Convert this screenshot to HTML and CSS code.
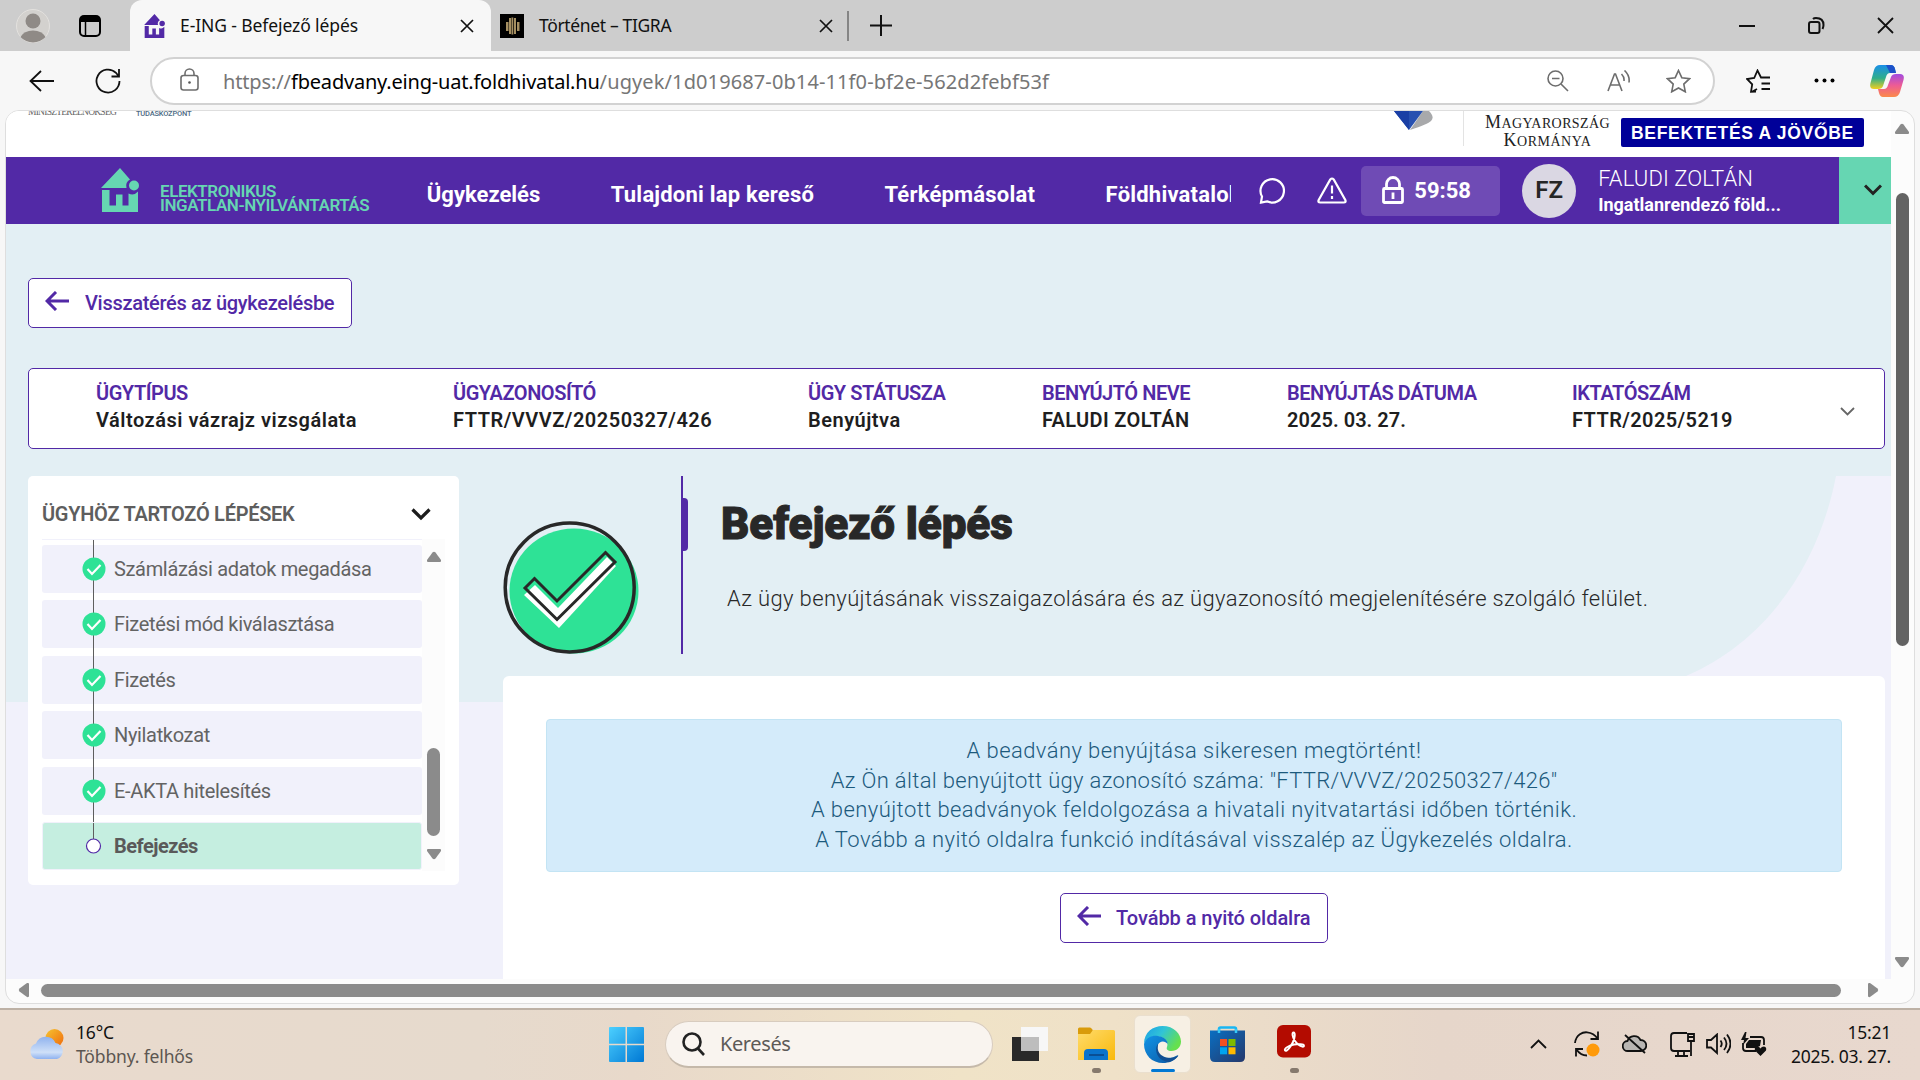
FILE: index.html
```html
<!DOCTYPE html>
<html lang="hu">
<head>
<meta charset="utf-8">
<title>E-ING - Befejező lépés</title>
<link rel="stylesheet" href="styles.css">
</head>
<body>
<svg width="0" height="0" class="defs">
  <defs>
    <linearGradient id="gWin" x1="0" y1="0" x2="1" y2="1"><stop offset="0" stop-color="#4cd0ff"/><stop offset="1" stop-color="#0078d4"/></linearGradient>
    <linearGradient id="gSun" x1="0" y1="0" x2="1" y2="1"><stop offset="0" stop-color="#f6c431"/><stop offset="1" stop-color="#f06a0c"/></linearGradient>
    <linearGradient id="gCloud" x1="0" y1="0" x2="0" y2="1"><stop offset="0" stop-color="#8fb2ee"/><stop offset=".7" stop-color="#cfe0f8"/><stop offset="1" stop-color="#8fb2f0"/></linearGradient>
    <linearGradient id="gFolder" x1="0" y1="0" x2="1" y2="1"><stop offset="0" stop-color="#ffdb6b"/><stop offset="1" stop-color="#f9b90c"/></linearGradient>
    <linearGradient id="gEdgeTop" x1="0" y1="0" x2="1" y2=".5"><stop offset="0" stop-color="#1a9ee8"/><stop offset=".5" stop-color="#31c4d6"/><stop offset="1" stop-color="#66e04e"/></linearGradient>
    <linearGradient id="gEdgeLow" x1="0" y1="0" x2="1" y2="1"><stop offset="0" stop-color="#1193e6"/><stop offset="1" stop-color="#0c59a4"/></linearGradient>
    <linearGradient id="gStore" x1="0" y1="0" x2="1" y2="1"><stop offset="0" stop-color="#0a6fc2"/><stop offset="1" stop-color="#25386b"/></linearGradient>
    <linearGradient id="gCopA" x1="0" y1="0" x2="0" y2="1"><stop offset="0" stop-color="#1a8fe8"/><stop offset=".55" stop-color="#2fae8a"/><stop offset="1" stop-color="#f2cf1d"/></linearGradient>
    <linearGradient id="gCopB" x1="0" y1="0" x2="0" y2="1"><stop offset="0" stop-color="#a24be0"/><stop offset=".5" stop-color="#ee5c94"/><stop offset="1" stop-color="#fb8a4a"/></linearGradient>
    <symbol id="house" viewBox="0 0 38 44">
      <path d="M0 20 19 0l10 11.5a7 7 0 0 0-3.5 8.5zM1 22h7.500v15.500H15V26.500h6.500v11h6V25.500a8 8 0 0 0 9.500-2V44H1z"/>
      <circle cx="33" cy="17.500" r="5"/>
    </symbol>
    <symbol id="arrow" viewBox="0 0 24 20"><path d="M11 1 2 10l9 9M2 10h22" fill="none" stroke="#5229a6" stroke-width="3"/></symbol>
    <symbol id="done" viewBox="0 0 24 24"><circle cx="12" cy="12" r="11.500" fill="#2ee296"/><path d="M5.500 12 10 17l8.500-9" fill="none" stroke="#fff" stroke-width="2.200"/></symbol>
  </defs>
</svg>

<header class="tabs">
  <svg class="avatar" width="34" height="34" viewBox="0 0 34 34"><circle cx="17" cy="17" r="16.500" fill="#d3d1ce" stroke="#e3e1de"/><circle cx="17" cy="12" r="7.500" fill="#8f8a86"/><path d="M4.500 28Q8 21.500 17 21.500T29.500 28A17 17 0 0 1 4.500 28" fill="#8f8a86"/></svg>
  <svg class="workspaces" width="22" height="22" viewBox="0 0 22 22"><rect x="1" y="1" width="20" height="20" rx="4" fill="none" stroke="#000" stroke-width="2"/><path d="M1 7V4q0-3 3-3h14q3 0 3 3v3z"/><path d="M6.500 7v14" stroke="#000" stroke-width="1.500"/></svg>
  <div class="tab tab-active">
    <svg class="favicon violet" width="21" height="24"><use href="#house"/></svg>
    <span class="tab-title">E-ING - Befejező lépés</span>
    <svg class="x" width="14" height="14" viewBox="0 0 14 14"><path d="m1 1 12 12M13 1 1 13"/></svg>
  </div>
  <div class="tab">
    <svg width="24" height="24" viewBox="0 0 24 24"><path d="M0 0h24v24H0z"/><path d="M6 8h2.500v9H6zM9 4h2v16H9zM11.500 3.500h1.800v17h-1.800zM14 4h2v16h-2zM17 8h2.500v9H17z" fill="#a58f61"/></svg>
    <span class="tab-title second">Történet – TIGRA</span>
    <svg class="x" width="14" height="14" viewBox="0 0 14 14"><path d="m1 1 12 12M13 1 1 13"/></svg>
  </div>
  <div class="tab-rule"></div>
  <svg class="plus" width="22" height="22" viewBox="0 0 22 22"><path d="M11 0v21M0 10.500h22"/></svg>
  <svg class="wmin" width="16" height="16" viewBox="0 0 16 16"><path d="M0 8h16"/></svg>
  <svg class="wmax" width="17" height="17" viewBox="0 0 17 17"><rect x="1" y="5" width="10.500" height="11" rx="2"/><path d="M5 2q1-1 3-1 7.500 0 7.500 7 0 2-1 4"/></svg>
  <svg class="wclose" width="17" height="17" viewBox="0 0 17 17"><path d="m1 1 15 15M16 1 1 16"/></svg>
</header>

<div class="toolbar">
  <svg class="nav-back" width="25" height="22" viewBox="0 0 25 22"><path d="M12 1 1.500 11 12 21M1.500 11H25"/></svg>
  <svg class="reload" width="26" height="26" viewBox="0 0 26 26"><path d="M24.500 13A11.500 11.500 0 1 1 21 4.800L23.500 8M24 1v7.500h-7.500"/></svg>
  <div class="address">
    <svg class="padlock" width="19" height="23" viewBox="0 0 19 23"><rect x="1" y="7.500" width="17" height="14.500" rx="2.500"/><path d="M5 7.500V5.500a4.500 4.500 0 0 1 9 0v2"/><circle cx="9.500" cy="14.500" r="1.300" fill="#555" stroke="none"/></svg>
    <div class="url"><span class="scheme">https://</span><span class="host">fbeadvany.eing-uat.foldhivatal.hu</span><span class="path">/ugyek/1d019687-0b14-11f0-bf2e-562d2febf53f</span></div>
    <svg class="zoomout" width="22" height="22" viewBox="0 0 22 22"><circle cx="8.500" cy="8.500" r="7.500"/><path d="M14 14l7 7M5 8.500h7.500"/></svg>
    <svg class="aloud" width="24" height="22" viewBox="0 0 24 22"><path d="M1 21 7.500 4h1L15 21M3.300 15h9.500M14.500 4q3 3 2.500 7M17.500 0.500q5.500 5 4.500 12"/></svg>
    <svg class="star" width="25" height="24" viewBox="0 0 25 24"><path d="m12.500 1.500 3.300 7.200 7.700 1-5.700 5.400 1.500 7.700-6.800-3.800-6.800 3.800 1.500-7.700L1.500 9.700l7.700-1z"/></svg>
  </div>
  <svg class="favs" width="25" height="24" viewBox="0 0 25 24"><path d="m10 22.500-5 .300 1.200-7.500L1 10l7.200-1 3.300-7.500L15 8.500h9M15.500 14.500H24M15.500 20H24M11 20l-5 2.800"/></svg>
  <svg class="dots" width="21" height="5" viewBox="0 0 21 5"><circle cx="2.500" cy="2.500" r="2"/><circle cx="10.500" cy="2.500" r="2"/><circle cx="18.500" cy="2.500" r="2"/></svg>
  <svg class="copilot" width="34" height="32" viewBox="0 0 34 32"><path d="M10 0h11q3 0 4 4l1 4h-6q-3 0-4 4l-3 9q-1 3-5 3H4q-5 0-3.500-6L4 5q1.500-5 6-5z" fill="url(#gCopA)"/><path d="M16 0h5q3 0 4 4l1 4h-6z" fill="#1d51c9"/><path d="M24 32H13q-3 0-4-4l-1-4h6q3 0 4-4l3-8q1-3 5-3h4q5 0 3.500 6L30 27q-1.500 5-6 5z" fill="url(#gCopB)"/></svg>
</div>

<div class="viewport">
  <div class="page">
    <div class="sponsors">
      <span class="ministry">MINISZTERELNÖKSÉG</span>
      <span class="center">TUDÁSKÖZPONT</span>
      <svg class="gem" width="40" height="19" viewBox="0 0 40 19"><path d="M16 19 29 0h6q6 6 2 10-3 3-21 9" fill="#a8a9ab"/><path d="M0 0h29L15 19z" fill="#2750b0"/><path d="M0 0h15v19z" fill="#1a3fa5"/></svg>
      <div class="gov"><span class="gov-one"><b>M</b>AGYARORSZÁG</span><span class="gov-two"><b>K</b>ORMÁNYA</span></div>
      <div class="invest">BEFEKTETÉS A JÖVŐBE</div>
    </div>

    <nav class="nav">
      <svg class="logo" width="38" height="44"><use href="#house"/></svg>
      <div class="brand"><span>ELEKTRONIKUS</span><span>INGATLAN-NYILVÁNTARTÁS</span></div>
      <div class="menu"><a>Ügykezelés</a><a class="spread">Tulajdoni lap kereső</a><a class="spread">Térképmásolat</a><a class="spread">Földhivatalok</a></div>
      <svg class="chat" width="27" height="27" viewBox="0 0 27 27"><path d="M2 25.500 3 19.500A11.700 11.700 0 1 1 8 24.300z"/></svg>
      <svg class="warn" width="30" height="27" viewBox="0 0 30 27"><path d="M13.300 2.500q1.700-2 3.400 0L28.300 23q1 2.500-1.500 2.500H3.200Q.7 25.500 1.700 23zM15 8.500v8M15 19v3"/></svg>
      <div class="timer">
        <svg width="22" height="28" viewBox="0 0 22 28"><rect x="1.500" y="12.500" width="19" height="14" rx="1"/><path d="M4.500 12V8a6.500 6.500 0 0 1 13 0v4M11 16.500v6.500"/></svg>
        <span>59:58</span>
      </div>
      <div class="initials">FZ</div>
      <div class="user"><span class="user-name">FALUDI ZOLTÁN</span><span class="user-role">Ingatlanrendező föld...</span></div>
      <div class="user-open"><svg width="18" height="12" viewBox="0 0 18 12"><path d="m1 1.500 8 8 8-8"/></svg></div>
    </nav>

    <main class="main">
      <svg class="backdrop" width="205" height="226" viewBox="0 0 205 226"><path d="M150 0h55v226H0V200C84 164 134 84 150 0" fill="#f1f1fb"/></svg>
      <button class="btn btn-return"><svg width="24" height="20"><use href="#arrow"/></svg><span>Visszatérés az ügykezelésbe</span></button>

      <section class="case">
        <div><b>ÜGYTÍPUS</b><span>Változási vázrajz vizsgálata</span></div>
        <div><b>ÜGYAZONOSÍTÓ</b><span>FTTR/VVVZ/20250327/426</span></div>
        <div><b>ÜGY STÁTUSZA</b><span>Benyújtva</span></div>
        <div><b>BENYÚJTÓ NEVE</b><span class="name">FALUDI ZOLTÁN</span></div>
        <div><b>BENYÚJTÁS DÁTUMA</b><span class="date">2025. 03. 27.</span></div>
        <div><b>IKTATÓSZÁM</b><span class="file">FTTR/2025/5219</span></div>
        <svg class="case-open" width="15" height="10" viewBox="0 0 15 10"><path d="m1 1 6.500 6.500L14 1"/></svg>
      </section>

      <div class="columns">
        <aside class="side">
          <h2>ÜGYHÖZ TARTOZÓ LÉPÉSEK <svg width="20" height="13" viewBox="0 0 20 13"><path d="m1.500 1.500 8.500 8.500 8.500-8.500"/></svg></h2>
          <div class="side-body">
            <ul class="steps">
              <li><svg width="24" height="24"><use href="#done"/></svg>Számlázási adatok megadása</li>
              <li><svg width="24" height="24"><use href="#done"/></svg>Fizetési mód kiválasztása</li>
              <li><svg width="24" height="24"><use href="#done"/></svg>Fizetés</li>
              <li><svg width="24" height="24"><use href="#done"/></svg>Nyilatkozat</li>
              <li><svg width="24" height="24"><use href="#done"/></svg>E-AKTA hitelesítés</li>
              <li class="current"><svg width="24" height="24" viewBox="0 0 24 24"><circle cx="11.500" cy="12" r="7" fill="#fff" stroke="#5229a6" stroke-width="1.200"/></svg>Befejezés</li>
            </ul>
            <div class="side-scroll">
              <svg width="16" height="12" viewBox="0 0 16 12"><path d="M6.500 1.500q1.500-1.500 3 0L15 9q.5 2-1 2H2Q.5 11 1 9z"/></svg>
              <i></i>
              <svg width="16" height="12" viewBox="0 0 16 12"><path d="M6.500 10.500q1.500 1.500 3 0L15 3q.5-2-1-2H2Q.5 1 1 3z"/></svg>
            </div>
          </div>
        </aside>

        <section class="content">
          <div class="intro">
            <svg class="success" width="136" height="134" viewBox="502 520 136 134"><ellipse cx="573" cy="590" rx="64.500" ry="62.500" fill="#2ee296"/><path d="M523 594 534 584l23 23 49-51 9 9-57 62z" fill="#fff"/><path d="m524 587 9.500-9.500L556 600l48.500-48.500 9.500 9.500-58 57.500z" fill="none" stroke="#282828" stroke-width="3"/><ellipse cx="568.700" cy="586.500" rx="64.500" ry="64.500" fill="none" stroke="#282828" stroke-width="3.500"/></svg>
            <div class="rule"></div>
            <div class="intro-text">
              <h1>Befejező lépés</h1>
              <p>Az ügy benyújtásának visszaigazolására és az ügyazonosító megjelenítésére szolgáló felület.</p>
            </div>
          </div>
          <div class="card">
            <div class="alert">
              <p>A beadvány benyújtása sikeresen megtörtént!</p>
              <p class="case-line">Az Ön által benyújtott ügy azonosító száma: "FTTR/VVVZ/20250327/426"</p>
              <p>A benyújtott beadványok feldolgozása a hivatali nyitvatartási időben történik.</p>
              <p>A Tovább a nyitó oldalra funkció indításával visszalép az Ügykezelés oldalra.</p>
            </div>
            <button class="btn btn-next"><svg width="24" height="20"><use href="#arrow"/></svg><span>Tovább a nyitó oldalra</span></button>
          </div>
        </section>
      </div>
    </main>
  </div>
  <div class="vscroll">
    <svg width="16" height="12" viewBox="0 0 16 12"><path d="M6.500 1.500q1.500-1.500 3 0L15 9q.5 2-1 2H2Q.5 11 1 9z"/></svg>
    <i></i>
    <svg class="down" width="16" height="12" viewBox="0 0 16 12"><path d="M6.500 10.500q1.500 1.500 3 0L15 3q.5-2-1-2H2Q.5 1 1 3z"/></svg>
  </div>
  <div class="hscroll">
    <svg width="12" height="16" viewBox="0 0 12 16"><path d="M1.500 6.500q-1.500 1.500 0 3L9 15q2 .5 2-1V2q0-1.500-2-1z"/></svg>
    <i></i>
    <svg class="right" width="12" height="16" viewBox="0 0 12 16"><path d="M10.500 6.500q1.500 1.500 0 3L3 15q-2 .5-2-1V2q0-1.500 2-1z"/></svg>
  </div>
</div>

<footer class="taskbar">
  <svg class="weather" width="36" height="31" viewBox="0 0 36 31"><circle cx="25.500" cy="9" r="9" fill="url(#gSun)"/><path d="M8 30a8 8 0 0 1-1-15.500A10.500 10.500 0 0 1 26.500 14 8.200 8.200 0 0 1 28 30z" fill="url(#gCloud)"/></svg>
  <div class="weather-text"><span>16°C</span><span class="muted">Többny. felhős</span></div>
  <svg class="start" width="35" height="35" viewBox="0 0 35 35" fill="url(#gWin)"><path d="M1 0h15.500v16.700H0V1q0-1 1-1zM18 0h16q1 0 1 1v15.700H18zM0 18.300h16.500V35H1q-1 0-1-1zM18 18.300h17V34q0 1-1 1H18z"/></svg>
  <div class="search"><svg width="23" height="24" viewBox="0 0 23 24"><circle cx="10" cy="10" r="8.500"/><path d="m16 16.500 6 6.500"/></svg><span>Keresés</span></div>
  <svg class="taskview" width="36" height="34" viewBox="0 0 36 34"><path d="M0 10h27v24H0z" fill="#292929"/><path d="M9 0h27v24H9z" fill="#f7f7f7"/><path d="M9 10h18v14H9z" fill="#bdbdbd"/></svg>
  <div class="app app-files"><svg width="37" height="33" viewBox="0 0 37 33"><path d="M0 2q0-1.500 1.500-1.500H12q1 0 2 1.500l1 1.500V8H0z" fill="#d99b0a"/><path d="M0 7h12l3-4h20.500q1.500 0 1.500 1.500V33H0z" fill="url(#gFolder)"/><path d="M6 33v-7q0-4 4-4h16q4 0 4 4v7z" fill="#0a74cc"/><path d="M11 28h15" stroke="#0a4f94" stroke-width="2"/></svg><i></i></div>
  <div class="app app-edge"><svg width="37" height="37" viewBox="0 0 37 37"><path d="M0 18C0 6 9 0 18.500 0 30 0 37 8 37 15.500 37 21 33 25 27.500 25c-4 0-5.500-2-4.500-4 1.500-4-.5-9-8-10.500C8 9.500 2 13 0 18" fill="url(#gEdgeTop)"/><path d="M0 18c2-7 9-9 14-8 7 1 10 5 9.500 8-2-3-8-4-10 2-2.500 7 4 12 10.500 12 4 0 7-1.500 9-2.500 1.500-.5 1 .5.500 1C30 35 25 37 19 37 8 37 0 29 0 18" fill="url(#gEdgeLow)"/><path d="M14 18c-4 4-2 17 11 18 4-1 8-4 9.500-6.500-7 5-19 2-20.500-5.500-.5-2.500 0-4.500 0-6" fill="#124f92"/></svg><i></i></div>
  <svg class="store" width="35" height="36" viewBox="0 0 35 36"><path d="M9 7V3q0-1.500 1.500-1.500h14Q26 1.500 26 3v4" fill="none" stroke="#19b6f3" stroke-width="2.500"/><path d="M0 4.500h35V31q0 5-5 5H5q-5 0-5-5z" fill="url(#gStore)"/><path d="M9 7V3M26 7V3" stroke="#35c9f8" stroke-width="2.500"/><path d="M10 13h7v7h-7z" fill="#f25022"/><path d="M18.500 13h7v7h-7z" fill="#7fba00"/><path d="M10 21.300h7v7h-7z" fill="#00a4ef"/><path d="M18.500 21.300h7v7h-7z" fill="#ffb900"/></svg>
  <div class="app app-pdf"><svg width="34" height="33" viewBox="0 0 34 33"><rect width="34" height="32.500" rx="6" fill="#b30b00"/><path d="M8 25.500C6.500 23 14 20 17 19.500c4-.5 10.500-1 10 1.500-.5 2-6-.5-9-5S15 7.500 16.500 7.500c2 0 1.500 5-.5 9.500s-6.500 10.500-8 8.500z" fill="none" stroke="#fff" stroke-width="1.900"/></svg><i></i></div>
  <svg class="chev" width="17" height="10" viewBox="0 0 17 10"><path d="m1 9 7.500-7.500L16 9"/></svg>
  <svg class="sync" width="26" height="26" viewBox="0 0 26 26"><path d="M1 12C2 3 9 1 13 1.300q7 .7 10.500 6.200M24 .500v7.500h-7.500M2 25.500v-7.500h7M2.500 18.500q4 6 10.500 6"/><circle cx="19" cy="19" r="6.500" fill="#ff9a0a" stroke="none"/></svg>
  <svg class="cloud" width="25" height="20" viewBox="0 0 25 20"><path d="M6 17a5 5 0 0 1-.5-10A7 7 0 0 1 18.500 6 5.500 5.500 0 0 1 19 17z" fill="#b9b6b3"/><path d="m3 1 20 18"/></svg>
  <svg class="monitor" width="25" height="25" viewBox="0 0 25 25"><path d="M17 1H4Q1 1 1 4v12q0 3 3 3h16M8 19v5M14 19v5M5 24h13M18 2h6v7h-6zM18 5h6M21 9v15"/></svg>
  <svg class="speaker" width="25" height="22" viewBox="0 0 25 22"><path d="M1 7h4l6-5.500v18.500L5 14.500H1zM14.500 7.500q2.500 3.300 0 6.500M18 4.500q5 6.300 0 12.500M21 1.500q7 9 0 18.500"/></svg>
  <svg class="battery" width="26" height="24" viewBox="0 0 26 24"><path d="M9 5h11q3 0 3 3v5M15 19H5q-3 0-3-3v-5"/><path d="M8 8h12l-1 6-4 2H5v-4zM4 0 0 8h3l-1 5 6-7H4.500l1-6zM19.500 24l-5.500-5.500q-1-3.500 2-4 2.500 0 3.500 2 1-2 3.500-2 3 .5 2 4z" fill="#111" stroke="none"/></svg>
  <div class="clock"><span>15:21</span><span>2025. 03. 27.</span></div>
</footer>
</body>
</html>
```
FILE: styles.css
```css
* { box-sizing: border-box; }
body {
  margin: 0; width: 1920px; height: 1080px; overflow: hidden;
  display: flex; flex-direction: column; background: #f7f7f7;
  font-family: "Noto Sans", "Open Sans", sans-serif; color: #111;
}
svg { display: block; flex: none; }
.defs { position: absolute; }
h1, h2, p, ul { margin: 0; padding: 0; }
span, b, a { white-space: nowrap; }

/* browser tabs */
.tabs { height: 51px; flex: none; background: #cdcdcd; display: flex; align-items: center; }
.avatar { margin-left: 16px; }
.workspaces { margin: 0 29px; }
.tab { height: 51px; display: flex; align-items: center; padding-left: 9px; width: 348px; }
.tab-active { width: 361px; padding-left: 14px; background: #f7f7f7; border-radius: 12px 12px 0 0; }
.tab-title { flex: 1; margin-left: 15px; font-size: 17.5px; letter-spacing: -.1px; padding-bottom: 1px; }
.tab-title.second { letter-spacing: -.35px; }
.violet { fill: #5229a6; }
.x { fill: none; stroke: #111; stroke-width: 1.700; margin-right: 6px; }
.tab-active .x { margin-right: 17px; }
.tab-rule { width: 2px; height: 30px; background: #858585; margin-left: 8px; }
.plus, .wmin, .wmax, .wclose { fill: none; stroke: #111; stroke-width: 2; }
.plus { margin-left: 21px; }
.wmin { margin-left: 847px; }
.wmax { margin-left: 53px; }
.wclose { margin-left: 52px; stroke-width: 1.800; }

/* browser toolbar */
.toolbar { height: 59px; flex: none; display: flex; align-items: center; }
.nav-back, .reload { fill: none; stroke: #111; stroke-width: 1.800; }
.nav-back { margin-left: 29px; }
.reload { margin-left: 41px; }
.address {
  margin-left: 29px; width: 1565px; height: 48px; border: 2px solid #d2d2d2; border-radius: 24px;
  background: #fff; display: flex; align-items: center; fill: none; stroke: #6d6d6d; stroke-width: 1.600;
}
.padlock { margin: 0 24px 2px 28px; }
.url { flex: 1; font-size: 20px; color: #767676; display: flex; padding-top: 1px; }
.scheme { width: 68px; letter-spacing: -.15px; }
.host { color: #000; letter-spacing: -.2px; }
.path { letter-spacing: .11px; }
.aloud { margin-left: 38px; }
.star { margin: 0 22px 0 35px; }
.favs { margin-left: 31px; fill: none; stroke: #111; stroke-width: 1.800; }
.dots { margin-left: 43px; }
.copilot { margin-left: 35px; }

/* page window with its scrollbars */
.viewport {
  margin: 0 5px; width: 1910px; height: 894px; flex: none; border: 1px solid #dedede; border-radius: 14px;
  overflow: hidden; background: #fcfcfc; display: grid;
  grid-template-columns: 1885px 23px; grid-template-rows: 868px 24px;
}
.page { background: #fff; overflow: hidden; font-family: Roboto, "Open Sans", sans-serif; }
.vscroll, .hscroll, .side-scroll { fill: #8b8b8b; }
.vscroll { grid-row: 1 / 3; grid-column: 2; padding: 12px 3px 0; display: flex; flex-direction: column; }
.vscroll i { width: 13px; height: 453px; margin: 58px 0 0 2px; border-radius: 7px; background: #636363; }
.vscroll .down { margin-top: 310px; }
.hscroll { grid-row: 2; grid-column: 1; display: flex; align-items: center; padding: 0 0 2px 12px; }
.hscroll i { width: 1800px; height: 13px; margin-left: 11px; border-radius: 7px; background: #8b8b8b; }
.hscroll .right { margin-left: 26px; }

/* sponsor strip */
.sponsors { height: 46px; display: flex; align-items: flex-start; overflow: hidden; }
.ministry { margin: -6px 0 0 22px; width: 108px; font: 9.500px/14px "Liberation Serif", serif; letter-spacing: -.75px; color: #666; }
.center { margin-top: -4px; width: 60px; font-size: 7.500px; line-height: 14px; font-weight: 500; letter-spacing: -.2px; color: #4d6b84; }
.gem { margin-left: 1198px; }
.gov {
  margin-left: 29px; padding: 0 11px 0 21px; width: 158px; height: 35px; border-left: 1px solid #e3e3e3;
  display: flex; flex-direction: column; align-items: center; color: #222;
  font: 14px/17px "Liberation Serif", serif;
}
.gov b { font-size: 18px; font-weight: 400; line-height: 16px; }
.gov-one { margin-top: 3px; letter-spacing: .4px; }
.gov-two { letter-spacing: .5px; }
.invest {
  margin-top: 7px; width: 243px; height: 29px; border-radius: 2px; background: #000099; color: #fff;
  font: bold 17.500px/30px "Liberation Sans", sans-serif; text-align: center; white-space: nowrap; letter-spacing: .7px;
}

/* application bar */
.nav { height: 67px; background: #5229a6; color: #fff; display: flex; align-items: center; }
.logo { margin: 0 0 1px 95px; fill: #66d6b2; }
.brand { margin: 14px 0 0 21px; width: 267px; display: flex; flex-direction: column; color: #66d6b2; font-size: 17px; font-weight: 600; line-height: 14px; letter-spacing: -.45px; }
.menu { width: 805px; overflow: hidden; display: flex; gap: 70.500px; font-size: 22px; font-weight: 700; padding-top: 7px; }
.spread { letter-spacing: .2px; }
.chat, .warn { fill: none; stroke: #fff; stroke-width: 2.200; }
.chat { margin-left: 28px; }
.warn { margin-left: 31px; }
.timer { margin-left: 14px; width: 139px; height: 50px; border-radius: 5px; background: #6f4bb5; display: flex; align-items: center; padding-left: 21px; gap: 10px; font-size: 22px; font-weight: 700; }
.timer svg { fill: none; stroke: #fff; stroke-width: 2.800; margin-top: -1px; }
.initials { margin-left: 22px; width: 54px; height: 54px; border-radius: 50%; background: #dad7e3; color: #262626; font-size: 24px; font-weight: 600; line-height: 53px; text-align: center; }
.user { margin-left: 22px; width: 241px; display: flex; flex-direction: column; }
.user-name { font-size: 22px; font-weight: 300; line-height: 27px; letter-spacing: .1px; }
.user-role { font-size: 18px; font-weight: 700; line-height: 25px; }
.user-open { width: 52px; height: 67px; background: #66d6b2; padding: 27px 0 0 25px; }
.user-open path { fill: none; stroke: #222; stroke-width: 3; }

/* main area */
.main { position: relative; height: 755px; padding: 54px 6px 0 22px; background: linear-gradient(#e3eff4 478px, #f1f1fb 478px); }
.backdrop { position: absolute; right: 0; top: 252px; }
.btn { position: relative; display: flex; align-items: center; height: 50px; padding: 0 0 0 16px; margin: 0; border: 1px solid #5229a6; border-radius: 5px; background: #fff; color: #5229a6; font: 500 20px/24px Roboto, sans-serif; }
.btn svg { margin-bottom: 4px; }
.btn-return { width: 324px; letter-spacing: -.3px; gap: 16px; }
.btn-next { width: 268px; gap: 15px; margin: 21px auto 0; letter-spacing: -.05px; }
.case {
  margin-top: 40px; height: 81px; position: relative; background: #fff; border: 1px solid #5229a6; border-radius: 5px;
  padding: 11px 0 0 67px; display: grid; grid-template-columns: 357px 355px 234px 245px 285px 264px 1fr;
  font-size: 20px; font-weight: 600;
}
.case div { display: flex; flex-direction: column; line-height: 27px; }
.case b { color: #5229a6; font-weight: 600; letter-spacing: -.45px; }
.case span { color: #1e1e1e; letter-spacing: .5px; }
.case .name { letter-spacing: .35px; }
.case .date { letter-spacing: .05px; }
.case .file { letter-spacing: .4px; }
.case-open { margin: 27px 0 0 4px; fill: none; stroke: #666; stroke-width: 1.800; }
.columns { margin-top: 27px; display: flex; gap: 44px; position: relative; }

/* steps panel */
.side { width: 431px; height: 409px; padding: 0 14px; background: #fff; border-radius: 5px; }
.side h2 { height: 63px; padding: 13px 14px 0 0; display: flex; align-items: center; justify-content: space-between; font-size: 20px; font-weight: 600; color: #5e5e5e; letter-spacing: -.28px; }
.side h2 path { fill: none; stroke: #1c1c1c; stroke-width: 3.200; }
.side-body { display: flex; height: 332px; }
.steps {
  width: 380px; height: 332px; padding-top: 5px; list-style: none; display: grid; grid-auto-rows: 48px; row-gap: 7.400px;
  border-top: 1px solid #f1f1fb;
  background: linear-gradient(#5e5e5e, #5e5e5e) 51px 0 / 1px 300px no-repeat;
}
.steps li { position: relative; display: flex; align-items: center; padding-left: 40px; gap: 8px; border-radius: 3px; color: #636363; font-size: 20px; font-weight: 400; letter-spacing: -.34px; background: linear-gradient(#5e5e5e, #5e5e5e) 51px 0 / 1px 100% no-repeat #f1f1fb; }
.steps .current { font-weight: 700; letter-spacing: -.5px; color: #5a5a5a; height: 48px; border: 1px solid #f1f1fb; padding-left: 39px; background: linear-gradient(#5e5e5e, #5e5e5e) 50px 0 / 1px 18px no-repeat #c5eee0; }
.side-scroll { width: 23px; background: #fcfcfc; padding: 12px 0 0 4px; }
.side-scroll i { display: block; width: 13px; height: 88px; margin: 185px 0 12px 1px; border-radius: 7px; background: #8b8b8b; }

/* step content */
.content { flex: 1; }
.intro { height: 200px; display: flex; }
.success { margin: 45px 0 0 0; }
.rule { margin-left: 42px; width: 7px; height: 178px; background: linear-gradient(#5229a6, #5229a6) 0 0 / 2px 100% no-repeat; padding-top: 22px; }
.rule::after { content: ""; display: block; height: 53px; background: #5229a6; border-radius: 0 4px 4px 0; }
.intro-text { margin-left: 33px; }
.intro h1 { font-size: 44px; line-height: 52px; font-weight: 900; color: #282828; margin-top: 22px; letter-spacing: -.1px; -webkit-text-stroke: 1px #282828; }
.intro p { margin: 35px 0 0 6px; font-size: 22px; line-height: 28px; font-weight: 300; color: #282828; letter-spacing: .36px; white-space: nowrap; }
.card { height: 320px; background: #fff; border-radius: 6px; padding: 43px 43px 0; }
.alert { height: 153px; padding-top: 16px; border: 1px solid #c3e4f4; border-radius: 4px; background: #d4ebfa; color: #1c5a7d; text-align: center; font-size: 22px; font-weight: 300; line-height: 29.600px; letter-spacing: .42px; }
.alert .case-line { letter-spacing: .32px; }

/* taskbar */
.taskbar {
  margin-top: 4px; height: 72px; border-top: 2px solid #bdb1a5; display: flex; align-items: center; padding-bottom: 2px;
  background: linear-gradient(90deg, #e9dacd 0, #e6dacd 25%, #e8d9ca 33%, #f0e3c7 50%, #efe1c8 58%, #e6d6ca 75%, #e8d8ce 100%);
  font-size: 17.500px;
}
.weather { margin-left: 29px; }
.weather-text { margin-left: 11px; width: 533px; display: flex; flex-direction: column; line-height: 24px; letter-spacing: -.15px; }
.muted { color: #5c5651; }
.search { margin-left: 21px; width: 328px; height: 47px; border-radius: 24px; background: #f9f4ef; border: 1px solid #d8ccbf; border-bottom: 2px solid #c5b9aa; display: flex; align-items: center; padding-left: 16px; gap: 15px; font-size: 20px; letter-spacing: -.4px; color: #5d5a57; }
.search svg { fill: none; stroke: #222; stroke-width: 2.600; }
.taskview { margin-left: 19px; }
.app { height: 58px; padding-top: 12px; display: flex; flex-direction: column; align-items: center; }
.app i { width: 9px; height: 5px; border-radius: 3px; background: #86796d; margin-top: 8px; }
.app-files { margin-left: 30px; }
.app-edge { margin-left: 19px; width: 57px; padding-top: 10px; border-radius: 6px; background: #f7f0e4; border: 1px solid #eadfce; }
.app-edge i { width: 24px; background: #0078d4; margin-top: 6px; }
.store { margin-left: 19px; }
.app-pdf { margin-left: 32px; padding-top: 10px; }
.app-pdf i { margin-top: 10px; }
.chev, .sync, .cloud, .monitor, .speaker, .battery { fill: none; stroke: #111; stroke-width: 1.800; }
.chev { margin-left: 219px; }
.sync { margin-left: 27px; }
.cloud { margin-left: 22px; }
.monitor { margin-left: 23px; }
.speaker { margin-left: 11px; }
.battery { margin-left: 10px; }
.clock { margin-left: auto; margin-right: 29px; display: flex; flex-direction: column; align-items: flex-end; line-height: 24px; letter-spacing: -.25px; }
```
